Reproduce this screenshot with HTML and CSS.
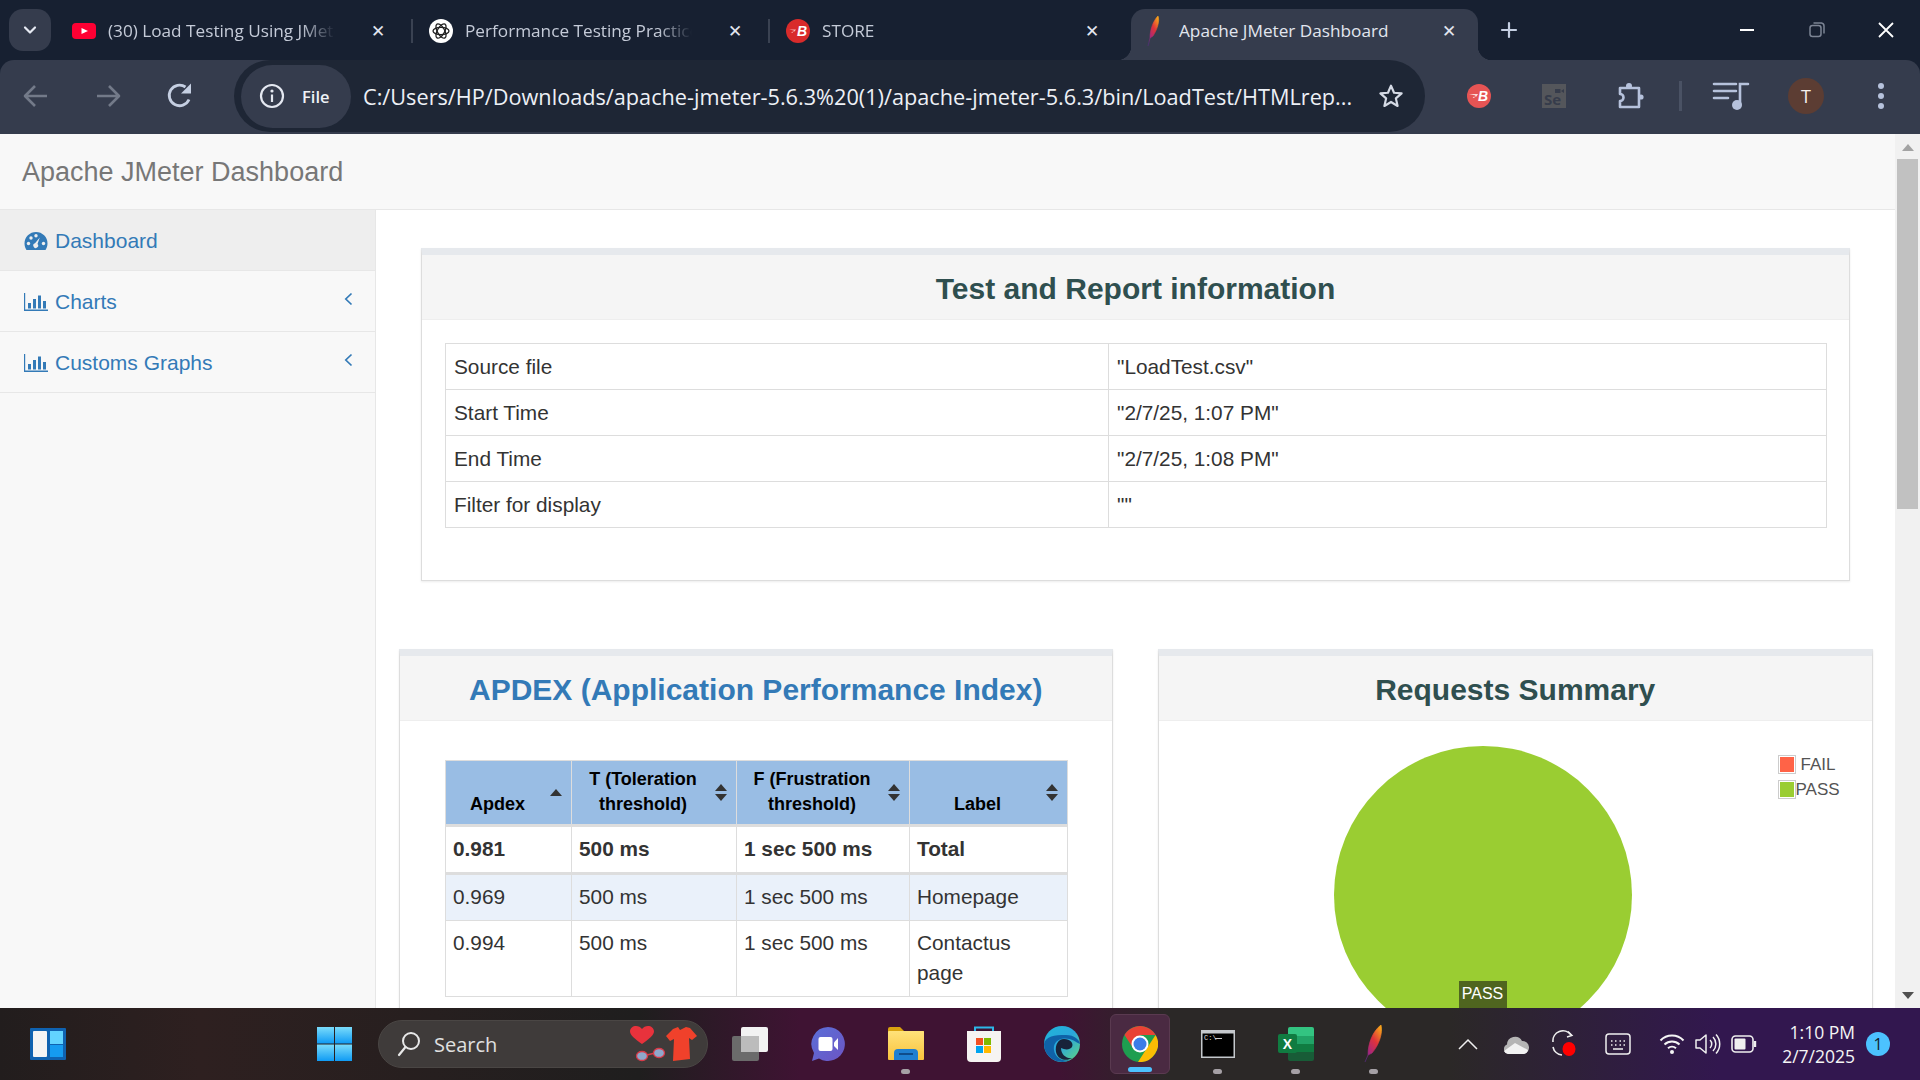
FILE: index.html
```html
<!DOCTYPE html>
<html lang="en">
<head>
    <meta charset="UTF-8">
    <meta name="viewport" content="width=device-width, initial-scale=1.0">
    <title>Apache JMeter Dashboard</title>
    <link rel="stylesheet" href="styles.css">
</head>
<body>
    <svg class="defs-holder" width="0" height="0">
        <defs>
            <linearGradient id="feather" x1="0.8" y1="0" x2="0.2" y2="1">
                <stop offset="0" stop-color="#f7a11b"/>
                <stop offset="0.4" stop-color="#e0333a"/>
                <stop offset="0.8" stop-color="#a3267f"/>
                <stop offset="1" stop-color="#5b2a86"/>
            </linearGradient>
            <linearGradient id="edgeFill" x1="0" y1="0" x2="1" y2="1">
                <stop offset="0" stop-color="#1fb5d8"/>
                <stop offset="0.5" stop-color="#2aa6dc"/>
                <stop offset="1" stop-color="#63d77e"/>
            </linearGradient>
            <linearGradient id="startFill" x1="0" y1="0" x2="0" y2="1">
                <stop offset="0" stop-color="#7adcfb"/>
                <stop offset="1" stop-color="#0f9bf4"/>
            </linearGradient>
            <linearGradient id="meetFill" x1="0" y1="0" x2="1" y2="1">
                <stop offset="0" stop-color="#5a6fd8"/>
                <stop offset="1" stop-color="#6d55c4"/>
            </linearGradient>
            <linearGradient id="folderFill" x1="0" y1="0" x2="0" y2="1">
                <stop offset="0" stop-color="#ffe27a"/>
                <stop offset="1" stop-color="#f9c23c"/>
            </linearGradient>
        </defs>
    </svg>

    <div class="tab-strip">
        <button class="tab-search">
            <svg width="16" height="16" viewBox="0 0 16 16"><path d="M3 5.5 8 10.5 13 5.5" fill="none" stroke="#e6eaf3" stroke-width="2.2" stroke-linecap="round" stroke-linejoin="round"/></svg>
        </button>

        <div class="tab">
            <span class="favicon">
                <svg width="24" height="16" viewBox="0 0 24 16"><rect width="24" height="16" rx="4" fill="#ff0033"/><path d="M9.5 5 16 8 9.5 11Z" fill="#fff"/></svg>
            </span>
            <span class="tab-title">(30) Load Testing Using JMeter</span>
            <span class="tab-close">&#10005;</span>
        </div>
        <span class="tab-sep"></span>
        <div class="tab">
            <span class="favicon">
                <svg width="24" height="24" viewBox="0 0 24 24">
                    <circle cx="12" cy="12" r="12" fill="#fff"/>
                    <g fill="none" stroke="#222" stroke-width="1.3">
                        <ellipse cx="12" cy="12" rx="8" ry="3.6"/>
                        <ellipse cx="12" cy="12" rx="8" ry="3.6" transform="rotate(60 12 12)"/>
                        <ellipse cx="12" cy="12" rx="8" ry="3.6" transform="rotate(120 12 12)"/>
                    </g>
                </svg>
            </span>
            <span class="tab-title">Performance Testing Practice</span>
            <span class="tab-close">&#10005;</span>
        </div>
        <span class="tab-sep"></span>
        <div class="tab">
            <span class="favicon">
                <svg width="24" height="24" viewBox="0 0 24 24">
                    <circle cx="12" cy="12" r="12" fill="#d92b2b"/>
                    <path d="M3 10.5H10L8.5 12.5H6L7 14H5L8 11.5" fill="#f7b5b5"/>
                    <text x="11" y="17" class="badge-b">B</text>
                </svg>
            </span>
            <span class="tab-title">STORE</span>
            <span class="tab-close">&#10005;</span>
        </div>
        <div class="tab tab-active">
            <span class="favicon">
                <svg width="24" height="32" viewBox="0 0 24 32"><path d="M15 1C17 6 14 15 10 21L7 23C7 15 10 6 15 1ZM7 23 5 31" fill="url(#feather)" stroke="url(#feather)" stroke-width="0.6"/></svg>
            </span>
            <span class="tab-title">Apache JMeter Dashboard</span>
            <span class="tab-close">&#10005;</span>
        </div>
        <span class="tab-new">
            <svg width="18" height="18" viewBox="0 0 18 18"><path d="M9 2V16M2 9H16" stroke="#c5cfe2" stroke-width="2.2" stroke-linecap="round"/></svg>
        </span>

        <div class="window-controls">
            <span class="win-btn">
                <svg width="16" height="16" viewBox="0 0 16 16"><path d="M1 8H15" stroke="#fff" stroke-width="2"/></svg>
            </span>
            <span class="win-btn">
                <svg width="16" height="16" viewBox="0 0 16 16"><rect x="1" y="3.5" width="11" height="11" rx="2.5" fill="none" stroke="#7c8494" stroke-width="1.5"/><path d="M4.5 1H12.5A3 3 0 0 1 15 4V11.5" fill="none" stroke="#7c8494" stroke-width="1.5"/></svg>
            </span>
            <span class="win-btn win-close">
                <svg width="18" height="18" viewBox="0 0 18 18"><path d="M2 2 16 16M16 2 2 16" stroke="#fff" stroke-width="1.8"/></svg>
            </span>
        </div>
    </div>

    <div class="toolbar">
        <span class="nav-btn">
            <svg width="26" height="26" viewBox="0 0 26 26"><path d="M24 13H3M12 3 2 13 12 23" fill="none" stroke="#737a89" stroke-width="2.6" stroke-linejoin="round"/></svg>
        </span>
        <span class="nav-btn">
            <svg width="26" height="26" viewBox="0 0 26 26"><path d="M2 13H23M14 3 24 13 14 23" fill="none" stroke="#737a89" stroke-width="2.6" stroke-linejoin="round"/></svg>
        </span>
        <span class="nav-btn">
            <svg width="28" height="28" viewBox="0 0 28 28"><path d="M23 17.5A10.3 10.3 0 1 1 19.5 5" fill="none" stroke="#c5cfe2" stroke-width="2.8"/><path d="M15 11.5 25 11.5 25 1.5Z" fill="#c5cfe2"/></svg>
        </span>

        <div class="omnibox">
            <div class="site-chip">
                <svg width="26" height="26" viewBox="0 0 26 26"><circle cx="13" cy="13" r="11" fill="none" stroke="#e4e8f1" stroke-width="2.2"/><circle cx="13" cy="8" r="1.6" fill="#e4e8f1"/><path d="M13 11.5V19" stroke="#e4e8f1" stroke-width="2.2"/></svg>
                <span class="chip-label">File</span>
            </div>
            <span class="url">C:/Users/HP/Downloads/apache-jmeter-5.6.3%20(1)/apache-jmeter-5.6.3/bin/LoadTest/HTMLrep...</span>
            <svg class="star" width="26" height="26" viewBox="0 0 24 24"><path d="M12 2.5 14.8 9 21.8 9.6 16.5 14.2 18.1 21.2 12 17.5 5.9 21.2 7.5 14.2 2.2 9.6 9.2 9Z" fill="none" stroke="#d5dae5" stroke-width="2" stroke-linejoin="round"/></svg>
        </div>

        <div class="toolbar-icons">
            <span class="ext-btn">
                <svg width="24" height="24" viewBox="0 0 24 24">
                    <circle cx="12" cy="12" r="12" fill="#e65454"/>
                    <path d="M2 10H11L9.5 12.5H6.5L8 14H5.5L8.5 11.5" fill="#fbd9d9"/>
                    <text x="11" y="17" class="badge-b">B</text>
                </svg>
            </span>
            <span class="ext-btn">
                <svg width="24" height="24" viewBox="0 0 24 24">
                    <rect width="24" height="24" fill="#54565b"/>
                    <path d="M13 5H18.5V9H13ZM19 7 22 5V9Z" fill="#363c4b"/>
                    <text x="2" y="21" class="selenium-text">Se</text>
                </svg>
            </span>
            <span class="ext-btn">
                <svg width="34" height="32" viewBox="0 0 34 32">
                    <path d="M8 8H27V27H8V21A3.5 3.5 0 0 0 8 14Z" fill="none" stroke="#b6c2dc" stroke-width="2.6" stroke-linejoin="round"/>
                    <circle cx="17" cy="6" r="3" fill="#b6c2dc"/>
                    <circle cx="29" cy="17" r="2.6" fill="#b6c2dc"/>
                </svg>
            </span>
            <span class="toolbar-sep"></span>
            <span class="ext-btn">
                <svg width="38" height="30" viewBox="0 0 38 30">
                    <path d="M2 3H24M2 10H24M2 17H16" stroke="#b6c2dc" stroke-width="2.6" stroke-linecap="round"/>
                    <path d="M28 24V3H36" fill="none" stroke="#b6c2dc" stroke-width="2.6" stroke-linecap="round"/>
                    <circle cx="25" cy="24" r="5" fill="#b6c2dc"/>
                </svg>
            </span>
            <span class="ext-btn">
                <span class="avatar">T</span>
            </span>
            <span class="ext-btn">
                <svg width="8" height="28" viewBox="0 0 8 28"><circle cx="4" cy="4" r="3" fill="#b6c2dc"/><circle cx="4" cy="14" r="3" fill="#b6c2dc"/><circle cx="4" cy="24" r="3" fill="#b6c2dc"/></svg>
            </span>
        </div>
    </div>

    <div class="viewport">
        <div class="page">
            <nav class="navbar">
                <span class="navbar-brand">Apache JMeter Dashboard</span>
            </nav>
            <div class="page-body">
                <aside class="sidebar">
                    <a class="side-link active">
                        <svg class="side-icon" width="24" height="20" viewBox="0 0 24 20"><path d="M12 1A11.5 11.5 0 0 0 .5 12.500C.5 15 1.300 17 2.500 19H21.500C22.700 17 23.500 15 23.500 12.500A11.500 11.500 0 0 0 12 1Z" fill="#337ab7"/><g fill="#eee"><circle cx="4.500" cy="12.500" r="1.700"/><circle cx="7" cy="7" r="1.700"/><circle cx="12" cy="4.800" r="1.700"/><circle cx="19.500" cy="12.500" r="1.700"/><path d="M15.800 6.500 13.500 13A2.400 2.400 0 1 1 11 12.300Z"/></g></svg>
                        <span>Dashboard</span>
                    </a>
                    <a class="side-link">
                        <svg class="side-icon" width="24" height="18" viewBox="0 0 24 18"><path d="M.5 0V17.300H24" fill="none" stroke="#337ab7" stroke-width="1.400"/><path d="M4 10H7V15.500H4ZM9 6H12V15.500H9ZM14 2.500H17V15.500H14ZM19 8H22V15.500H19Z" fill="#337ab7"/></svg>
                        <span>Charts</span>
                        <svg class="side-arrow" width="9" height="14" viewBox="0 0 9 14"><path d="M7.500 1.500 1.800 7 7.500 12.500" fill="none" stroke="#337ab7" stroke-width="1.700"/></svg>
                    </a>
                    <a class="side-link">
                        <svg class="side-icon" width="24" height="18" viewBox="0 0 24 18"><path d="M.5 0V17.300H24" fill="none" stroke="#337ab7" stroke-width="1.400"/><path d="M4 10H7V15.500H4ZM9 6H12V15.500H9ZM14 2.500H17V15.500H14ZM19 8H22V15.500H19Z" fill="#337ab7"/></svg>
                        <span>Customs Graphs</span>
                        <svg class="side-arrow" width="9" height="14" viewBox="0 0 9 14"><path d="M7.500 1.500 1.800 7 7.500 12.500" fill="none" stroke="#337ab7" stroke-width="1.700"/></svg>
                    </a>
                </aside>

                <main class="content">
                    <section class="panel panel-info">
                        <div class="panel-heading">
                            <h3 class="panel-title">Test and Report information</h3>
                        </div>
                        <div class="panel-body info-body">
                            <table class="data-table info-table">
                                <colgroup><col class="info-key"><col></colgroup>
                                <tbody>
                                    <tr><td>Source file</td><td>"LoadTest.csv"</td></tr>
                                    <tr><td>Start Time</td><td>"2/7/25, 1:07 PM"</td></tr>
                                    <tr><td>End Time</td><td>"2/7/25, 1:08 PM"</td></tr>
                                    <tr><td>Filter for display</td><td>""</td></tr>
                                </tbody>
                            </table>
                        </div>
                    </section>

                    <div class="panel-row">
                        <section class="panel">
                            <div class="panel-heading">
                                <h3 class="panel-title title-link">APDEX (Application Performance Index)</h3>
                            </div>
                            <div class="panel-body apdex-body">
                                <table class="data-table apdex-table">
                                    <colgroup>
                                        <col class="col-apdex"><col class="col-t"><col class="col-f"><col class="col-label">
                                    </colgroup>
                                    <thead>
                                        <tr>
                                            <th>Apdex<span class="sort sort-asc"></span></th>
                                            <th>T (Toleration threshold)<span class="sort"></span></th>
                                            <th>F (Frustration threshold)<span class="sort"></span></th>
                                            <th>Label<span class="sort"></span></th>
                                        </tr>
                                    </thead>
                                    <tbody>
                                        <tr class="row-total"><td>0.981</td><td>500 ms</td><td>1 sec 500 ms</td><td>Total</td></tr>
                                        <tr class="row-even"><td>0.969</td><td>500 ms</td><td>1 sec 500 ms</td><td>Homepage</td></tr>
                                        <tr><td>0.994</td><td>500 ms</td><td>1 sec 500 ms</td><td>Contactus page</td></tr>
                                    </tbody>
                                </table>
                            </div>
                        </section>

                        <section class="panel">
                            <div class="panel-heading">
                                <h3 class="panel-title">Requests Summary</h3>
                            </div>
                            <div class="panel-body chart-body">
                                <div class="pie">
                                    <span class="pie-label">PASS</span>
                                </div>
                                <div class="legend">
                                    <div class="legend-row"><span class="legend-box"><span class="legend-fail"></span></span><span class="legend-text legend-text-fail">FAIL</span></div>
                                    <div class="legend-row"><span class="legend-box"><span class="legend-pass"></span></span><span class="legend-text">PASS</span></div>
                                </div>
                            </div>
                        </section>
                    </div>
                </main>
            </div>
        </div>

        <div class="scrollbar">
            <span class="scroll-arrow scroll-up"></span>
            <span class="scroll-thumb"></span>
            <span class="scroll-arrow scroll-down"></span>
        </div>
    </div>

    <footer class="taskbar">
        <span class="task-slot task-widgets">
            <svg width="36" height="32" viewBox="0 0 36 32">
                <rect width="36" height="32" rx="1" fill="#0f62b0"/>
                <rect x="3" y="3" width="14" height="26" rx="1" fill="#f4f4f4"/>
                <rect x="20" y="3" width="13" height="13" fill="#62d4ff"/>
                <rect x="20" y="17" width="13" height="12" fill="#159bf0"/>
            </svg>
        </span>
        <span class="task-slot task-start">
            <svg width="35" height="34" viewBox="0 0 35 34">
                <rect width="17" height="16.500" fill="url(#startFill)"/>
                <rect x="18" width="17" height="16.500" fill="url(#startFill)"/>
                <rect y="17.500" width="17" height="16.500" fill="url(#startFill)"/>
                <rect x="18" y="17.500" width="17" height="16.500" fill="url(#startFill)"/>
            </svg>
        </span>
        <div class="task-search">
            <svg width="24" height="26" viewBox="0 0 24 26"><circle cx="14" cy="10" r="8" fill="none" stroke="#e8e8e8" stroke-width="2"/><path d="M8.500 16 2 24" stroke="#e8e8e8" stroke-width="2.200" stroke-linecap="round"/></svg>
            <span class="search-text">Search</span>
            <svg class="search-art" width="68" height="36" viewBox="0 0 68 36">
                <path d="M13 18C6 13 1 9 1 5.500 1 2 4 0 7 0 9.500 0 11.500 1 13 3 14.500 1 16.500 0 19 0 22 0 25 2 25 5.500 25 9 20 13 13 18Z" fill="#e8323c"/>
                <path d="M18 29 26 27" stroke="#d93a48" stroke-width="1.500"/>
                <g fill="#8fa8cc" stroke="#d93a48" stroke-width="1.300"><ellipse cx="13" cy="30" rx="5.500" ry="4.500"/><ellipse cx="30" cy="27" rx="5.500" ry="4.500"/></g>
                <path d="M44 3 49 1 51 4 57 1 61 2 68 10 63 14 60 12 61 33 44 35 45 13 41 15 37 10Z" fill="#f0412b"/>
            </svg>
        </div>
        <span class="task-slot">
            <svg width="36" height="34" viewBox="0 0 36 34">
                <rect y="9" width="27" height="25" rx="2" fill="#6b6b6b"/>
                <rect x="9" width="27" height="25" rx="2" fill="#f2f2f2"/>
                <rect x="9" y="9" width="18" height="16" fill="#bcbcbc"/>
            </svg>
        </span>
        <span class="task-slot">
            <svg width="34" height="34" viewBox="0 0 34 34">
                <path d="M17 0A17 17 0 1 1 8 31.500L1 34 3 26A17 17 0 0 1 17 0Z" fill="url(#meetFill)"/>
                <rect x="7.500" y="10" width="14" height="14" rx="2" fill="#fff"/>
                <path d="M23 15.500 27 11V23L23 19Z" fill="#fff"/>
            </svg>
        </span>
        <span class="task-slot task-running">
            <svg width="36" height="34" viewBox="0 0 36 34">
                <path d="M0 2A2 2 0 0 1 2 0H12L16 4H36V12H0Z" fill="#d9a20f"/>
                <rect y="4" width="36" height="29" rx="1" fill="url(#folderFill)"/>
                <path d="M6 33V26A4 4 0 0 1 10 22H26A4 4 0 0 1 30 26V33Z" fill="#1f7fd0"/>
                <rect x="11" y="26" width="14" height="2" fill="#0f4c8a"/>
            </svg>
        </span>
        <span class="task-slot">
            <svg width="36" height="36" viewBox="0 0 36 36">
                <path d="M9 7V1.500H27V7" fill="none" stroke="#2cb7e8" stroke-width="2"/>
                <path d="M1 5H35V32A4 4 0 0 1 31 36H5A4 4 0 0 1 1 32Z" fill="#f6f4f2"/>
                <rect x="10" y="12" width="7" height="7" fill="#f25022"/>
                <rect x="18" y="12" width="7" height="7" fill="#7fba00"/>
                <rect x="10" y="20" width="7" height="7" fill="#00a4ef"/>
                <rect x="18" y="20" width="7" height="7" fill="#ffb900"/>
            </svg>
        </span>
        <span class="task-slot">
            <svg width="36" height="36" viewBox="0 0 36 36">
                <circle cx="18" cy="18" r="18" fill="url(#edgeFill)"/>
                <path d="M0 18A18 18 0 0 0 26 34C18 36 11 31 10 24 9 18 13 13 20 12.500 27 12 32 16 36 18 36 14 30 9 22 9 10 9 2 10 0 18Z" fill="#0f62a8"/>
                <path d="M20 13C26 13 30 17 28 21 26 24 21 24 17 22 17 29 23 33 28 32 24 35 14 35 12 26 11 19 14 13 20 13Z" fill="#18233a"/>
            </svg>
        </span>
        <span class="task-slot task-current">
            <svg width="36" height="36" viewBox="0 0 36 36">
                <circle cx="18" cy="18" r="18" fill="#1e9e50"/>
                <path d="M16 35.900A18 18 0 0 0 33.600 9L25 22Z" fill="#fbbc04"/>
                <path d="M33.600 9A18 18 0 0 0 2.500 9L11 22 18 9Z" fill="#e94235"/>
                <circle cx="18" cy="18" r="8.500" fill="#fff"/>
                <circle cx="18" cy="18" r="6.500" fill="#3b7de8"/>
            </svg>
        </span>
        <span class="task-slot task-running">
            <svg width="34" height="28" viewBox="0 0 34 28">
                <rect width="34" height="28" fill="#c4c8cc"/>
                <rect x="1.500" y="3.500" width="31" height="23" fill="#000"/>
                <text x="3" y="10" class="cmd-text">C:\</text>
                <rect x="14" y="8" width="7" height="1" fill="#ccc"/>
            </svg>
        </span>
        <span class="task-slot task-running">
            <svg width="36" height="34" viewBox="0 0 36 34">
                <path d="M10 2A2 2 0 0 1 12 0H34A2 2 0 0 1 36 2V17H10Z" fill="#33c481"/>
                <rect x="10" y="9" width="26" height="8" fill="#21a366"/>
                <rect x="10" y="17" width="26" height="8" fill="#107c41"/>
                <path d="M10 25H36V32A2 2 0 0 1 34 34H12A2 2 0 0 1 10 32Z" fill="#185c37"/>
                <rect y="7" width="19" height="19" rx="2" fill="#107c41"/>
                <text x="9.500" y="22" class="excel-text">X</text>
            </svg>
        </span>
        <span class="task-slot task-running">
            <svg width="20" height="38" viewBox="0 0 20 38"><path d="M17 0C19 8 15 20 8 28L4 30C4 18 9 6 17 0ZM4 30 1 37" fill="url(#feather)" stroke="url(#feather)" stroke-width="0.700"/></svg>
        </span>

        <div class="tray">
            <span class="tray-icon tray-chevron">
                <svg width="20" height="12" viewBox="0 0 20 12"><path d="M1 11 10 2 19 11" fill="none" stroke="#f0f0f0" stroke-width="1.500"/></svg>
            </span>
            <span class="tray-icon tray-cloud">
                <svg width="26" height="20" viewBox="0 0 26 20"><path d="M5 20A5 5 0 0 1 4 10.500 8 8 0 0 1 19 7 6.500 6.500 0 0 1 20 20Z" fill="#b5b5b5"/><path d="M1 17 12 9 25 16A5 5 0 0 1 20 20H5A5 5 0 0 1 1 17Z" fill="#f2f2f2"/></svg>
            </span>
            <span class="tray-icon tray-sync">
                <svg width="30" height="28" viewBox="0 0 30 28"><path d="M4 12A10 10 0 0 1 22 5M4 17A10 10 0 0 0 13 25" fill="none" stroke="#f0f0f0" stroke-width="1.600"/><path d="M19 1.500 23 5.500 18 7" fill="none" stroke="#f0f0f0" stroke-width="1.400"/><ellipse cx="20" cy="19" rx="6.500" ry="7" fill="#f00"/></svg>
            </span>
            <span class="tray-icon tray-keyboard">
                <svg width="26" height="22" viewBox="0 0 26 22"><rect x="1" y="1" width="24" height="20" rx="3" fill="none" stroke="#f0f0f0" stroke-width="1.500"/><path d="M6 8H7.500M10 8H11.500M14.500 8H16M18.500 8H20M6 12H7.500M10 12H11.500M14.500 12H16M18.500 12H20M8 16H18" stroke="#f0f0f0" stroke-width="1.500"/></svg>
            </span>
            <span class="tray-icon tray-wifi">
                <svg width="26" height="22" viewBox="0 0 26 22"><path d="M1.500 7.500A16 16 0 0 1 24.500 7.500M5.500 11.500A11 11 0 0 1 20.500 11.500M9 15.200A6 6 0 0 1 17 15.200" fill="none" stroke="#f5f5f5" stroke-width="2"/><circle cx="13" cy="19" r="2" fill="#f5f5f5"/></svg>
            </span>
            <span class="tray-icon tray-volume">
                <svg width="26" height="24" viewBox="0 0 26 24"><path d="M1 8H5L11 3V21L5 16H1Z" fill="none" stroke="#f0f0f0" stroke-width="1.500" stroke-linejoin="round"/><path d="M15 8A5.500 5.500 0 0 1 15 16M18 5A10 10 0 0 1 18 19M21 2.500A14 14 0 0 1 21 21.500" fill="none" stroke="#f0f0f0" stroke-width="1.500"/></svg>
            </span>
            <span class="tray-icon tray-battery">
                <svg width="26" height="18" viewBox="0 0 26 18"><rect x="1" y="1" width="21" height="16" rx="3.500" fill="none" stroke="#f0f0f0" stroke-width="1.600"/><rect x="3.500" y="3.500" width="11" height="11" rx="1" fill="#f0f0f0"/><path d="M24 6V12" stroke="#f0f0f0" stroke-width="2.400"/></svg>
            </span>
            <div class="clock">
                <span>1:10 PM</span>
                <span>2/7/2025</span>
            </div>
            <span class="notify-badge">1</span>
        </div>
    </footer>
</body>
</html>
```

FILE: styles.css
```css
* {
    box-sizing: border-box;
}

html, body {
    margin: 0;
    padding: 0;
    height: 100%;
    overflow: hidden;
}

body {
    display: flex;
    flex-direction: column;
    height: 1080px;
    background-color: #172031;
    font-family: 'Liberation Sans', Arial, sans-serif;
}

.defs-holder {
    position: absolute;
}

/* browser tabs */
.tab-strip {
    display: flex;
    align-items: flex-start;
    height: 60px;
    flex: none;
    padding-left: 9px;
    background-color: #172031;
    font-family: 'Open Sans', 'Noto Sans', sans-serif;
}

.tab-search {
    display: flex;
    align-items: center;
    justify-content: center;
    width: 42px;
    height: 42px;
    margin-top: 9px;
    padding: 0;
    border: 0;
    border-radius: 14px;
    background-color: #353c4d;
}

.tab {
    display: flex;
    align-items: center;
    width: 355px;
    height: 51px;
    margin-top: 9px;
    padding: 0 21px 8px 16px;
    font-size: 17.200px;
    color: #c5cbd8;
}

.tab:first-of-type {
    margin-left: 5px;
}

.favicon {
    display: flex;
    align-items: center;
    justify-content: center;
    flex: none;
    width: 24px;
    margin-right: 12px;
}

.tab-title {
    width: 227px;
    overflow: hidden;
    white-space: nowrap;
    -webkit-mask-image: linear-gradient(to right, #000 85%, transparent 100%);
    mask-image: linear-gradient(to right, #000 85%, transparent 100%);
}

.tab-close {
    width: 24px;
    margin-left: auto;
    text-align: center;
    font-size: 17px;
    font-family: 'DejaVu Sans', sans-serif;
    color: #e2e6ef;
}

.tab-sep {
    flex: none;
    width: 2px;
    height: 24px;
    margin-top: 19px;
    background-color: #3a4252;
}

.tab-active {
    position: relative;
    width: 347px;
    margin-left: 6px;
    padding: 0 17px 8px 12px;
    border-radius: 14px 14px 0 0;
    background-color: #353c4d;
    color: #e2e6ef;
}

.tab-active::before,
.tab-active::after {
    content: "";
    position: absolute;
    bottom: 0;
    width: 14px;
    height: 14px;
}

.tab-active::before {
    left: -14px;
    background: radial-gradient(circle at 0 0, transparent 14px, #353c4d 14.500px);
}

.tab-active::after {
    right: -14px;
    background: radial-gradient(circle at 100% 0, transparent 14px, #353c4d 14.500px);
}

.tab-active .tab-title {
    -webkit-mask-image: none;
    mask-image: none;
}

.tab-new {
    display: flex;
    align-items: center;
    justify-content: center;
    width: 36px;
    height: 36px;
    margin: 12px 0 0 13px;
}

.window-controls {
    display: flex;
    margin-left: auto;
}

.win-btn {
    display: flex;
    align-items: center;
    justify-content: center;
    width: 70px;
    height: 60px;
}

.win-close {
    width: 68px;
}

/* address bar */
.toolbar {
    display: flex;
    align-items: center;
    flex: none;
    height: 74px;
    padding-bottom: 2px;
    border-radius: 14px 14px 0 0;
    background-color: #353c4d;
}

.nav-btn {
    display: flex;
    align-items: center;
    justify-content: center;
    width: 72px;
    height: 72px;
}

.omnibox {
    display: flex;
    align-items: center;
    width: 1191px;
    height: 72px;
    margin-left: 18px;
    padding-left: 7px;
    border-radius: 36px;
    background-color: #1e2635;
}

.site-chip {
    display: flex;
    align-items: center;
    flex: none;
    width: 110px;
    height: 63px;
    padding-left: 18px;
    border-radius: 32px;
    background-color: #353c4d;
}

.chip-label {
    margin-left: 17px;
    font: 600 16.500px 'Open Sans', sans-serif;
    color: #eef1f6;
}

.url {
    flex: 1;
    margin-left: 12px;
    font: 21.700px 'Open Sans', sans-serif;
    color: #edf0f6;
    white-space: nowrap;
}

.star {
    margin-right: 21px;
}

.toolbar-icons {
    display: flex;
    align-items: center;
    margin-left: 16.500px;
}

.ext-btn {
    display: flex;
    align-items: center;
    justify-content: center;
    width: 75px;
    height: 72px;
}

.toolbar-sep {
    width: 3px;
    height: 30px;
    margin: 0 12px;
    background-color: #4a5264;
}

.avatar {
    display: flex;
    align-items: center;
    justify-content: center;
    width: 36px;
    height: 36px;
    border-radius: 50%;
    background-color: #5c3d33;
    color: #f5f0ee;
    font: 18px 'Open Sans', sans-serif;
}

.badge-b {
    font: italic 700 14px 'Liberation Sans', sans-serif;
    fill: #fff;
}

.selenium-text {
    font: 700 15px 'Open Sans', sans-serif;
    fill: #363c4b;
}

.cmd-text {
    font: 7px 'Liberation Mono', monospace;
    fill: #ddd;
}

.excel-text {
    font: 700 14px 'Liberation Sans', sans-serif;
    fill: #fff;
    text-anchor: middle;
}

/* page in the browser window */
.viewport {
    display: flex;
    flex: 1;
    min-height: 0;
    background-color: #fff;
}

.page {
    flex: 1;
    min-width: 0;
    overflow: hidden;
    color: #333;
    font-size: 21px;
    line-height: 30px;
}

.navbar {
    display: flex;
    align-items: center;
    height: 76px;
    padding-left: 22px;
    border-bottom: 1px solid #e7e7e7;
    background-color: #f8f8f8;
}

.navbar-brand {
    font-size: 27px;
    color: #777;
}

.page-body {
    display: flex;
    height: 800px;
}

.sidebar {
    flex: none;
    width: 376px;
    border-right: 1px solid #e7e7e7;
    background-color: #f8f8f8;
}

.side-link {
    display: flex;
    align-items: center;
    height: 61px;
    padding: 1px 22px 0 24px;
    border-bottom: 1px solid #e7e7e7;
    color: #337ab7;
}

.side-link.active {
    background-color: #eee;
}

.side-icon {
    flex: none;
    margin-right: 7px;
}

.side-arrow {
    margin: -6px 0 0 auto;
}

.content {
    flex: 1;
    min-width: 0;
    padding: 38px 22px 0 23px;
}

.panel {
    border: 1px solid #ddd;
    border-top-width: 7px;
    border-top-color: #e6e9ed;
    background-color: #fff;
    box-shadow: 0 1px 2px rgba(0, 0, 0, 0.08);
}

.panel-info {
    margin: 0 23px 68px 22px;
}

.panel-heading {
    display: flex;
    align-items: center;
    justify-content: center;
    height: 65px;
    padding-top: 3px;
    border-bottom: 1px solid #eee;
    background-color: #f5f5f5;
}

.panel-title {
    margin: 0;
    font-size: 30px;
    font-weight: 700;
    color: #2f4f4f;
}

.title-link {
    color: #337ab7;
}

.info-body {
    padding: 23px 22px 52px 23px;
}

.apdex-body {
    padding: 39px 44px 40px 45px;
}

.chart-body {
    position: relative;
    height: 340px;
}

.panel-row {
    display: grid;
    grid-template-columns: 713.500px 1fr;
    gap: 45px;
}

/* tables */
.data-table {
    width: 100%;
    table-layout: fixed;
    border-collapse: collapse;
    font-size: 20.800px;
}

.data-table td,
.data-table th {
    padding: 8px 8px 7px;
    border: 1px solid #ddd;
    vertical-align: top;
}

.info-key {
    width: 663px;
}

.col-apdex {
    width: 126px;
}

.col-t {
    width: 165px;
}

.col-f {
    width: 173px;
}

.col-label {
    width: 158px;
}

.apdex-table td {
    padding: 7px 8px 8px 7px;
}

.apdex-table th {
    position: relative;
    padding: 6px 30px 7px 8px;
    border-bottom: 3px solid #ddd;
    background-color: #99bde4;
    color: #000;
    font-size: 18px;
    line-height: 25px;
    text-align: center;
    vertical-align: bottom;
}

.row-total td {
    border-bottom: 3px solid #ddd;
    font-weight: 700;
}

.row-even td {
    background-color: #eaf1fa;
}

/* tablesorter arrows */
.sort {
    position: absolute;
    top: 50%;
    right: 9px;
    width: 12px;
    height: 17px;
    margin-top: -9px;
}

.sort::before,
.sort::after {
    content: "";
    position: absolute;
    left: 0;
    border-left: 6px solid transparent;
    border-right: 6px solid transparent;
}

.sort::before {
    top: 0;
    border-bottom: 7px solid #333;
}

.sort::after {
    bottom: 0;
    border-top: 7px solid #333;
}

.sort-asc::after {
    display: none;
}

.sort-asc::before {
    top: 5px;
}

/* pie chart */
.pie {
    position: absolute;
    top: 25px;
    left: 175px;
    width: 298px;
    height: 298px;
    border-radius: 50%;
    background-color: #9acd32;
}

.pie-label {
    position: absolute;
    top: 235px;
    left: 125px;
    width: 48px;
    height: 27px;
    background-color: #4f651f;
    color: #fff;
    font-size: 16px;
    line-height: 26px;
    text-align: center;
}

.legend {
    position: absolute;
    top: 34px;
    left: 619px;
    color: #545454;
    font-size: 17px;
    line-height: 19px;
}

.legend-row {
    display: flex;
    height: 25px;
}

.legend-box {
    display: flex;
    align-items: center;
    justify-content: center;
    width: 18px;
    height: 19px;
    border: 1px solid #ccc;
}

.legend-fail,
.legend-pass {
    display: block;
    width: 14px;
    height: 15px;
}

.legend-fail {
    background-color: #ff6347;
}

.legend-pass {
    background-color: #9acd32;
}

.legend-text-fail {
    margin-left: 5px;
}

/* page scrollbar */
.scrollbar {
    display: flex;
    flex-direction: column;
    align-items: center;
    flex: none;
    width: 25px;
    background-color: #f1f1f1;
}

.scroll-arrow {
    flex: none;
    width: 0;
    height: 0;
    border-left: 6px solid transparent;
    border-right: 6px solid transparent;
}

.scroll-up {
    margin-top: 10px;
    border-bottom: 7px solid #a3a3a3;
}

.scroll-down {
    margin-top: auto;
    margin-bottom: 9px;
    border-top: 7px solid #505050;
}

.scroll-thumb {
    width: 21px;
    height: 350px;
    margin-top: 8px;
    background-color: #c1c1c1;
}

/* windows taskbar */
.taskbar {
    display: flex;
    align-items: center;
    flex: none;
    height: 72px;
    padding-left: 9px;
    background: linear-gradient(to right, #221d1d 0, #2e2020 200px, #1f1e1e 640px, #3f1333 800px, #3f1333 1060px, #2b2827 1170px, #2b2827 1450px, #32174f 1720px, #32174f 1920px);
}

.task-slot {
    position: relative;
    display: flex;
    align-items: center;
    justify-content: center;
    flex: none;
    width: 78px;
    height: 60px;
}

.task-start {
    margin-left: 208px;
    margin-right: 5px;
}

.task-search {
    display: flex;
    align-items: center;
    flex: none;
    width: 330px;
    height: 48px;
    margin-right: 3px;
    padding-left: 18px;
    border: 1px solid #4a4644;
    border-radius: 24px;
    background-color: #3f3b3a;
}

.search-text {
    margin-left: 13px;
    color: #e0e0e0;
    font: 20px 'Open Sans', sans-serif;
}

.search-art {
    margin-left: auto;
    margin-right: 10px;
}

.task-running::after {
    content: "";
    position: absolute;
    bottom: 0;
    left: 34px;
    width: 9px;
    height: 5px;
    border-radius: 3px;
    background-color: #a5a0a5;
}

.task-current {
    width: 60px;
    margin: 0 9px;
    border-radius: 6px;
    border: 1px solid #5a3a50;
    background-color: #4a2a42;
}

.task-current::after {
    content: "";
    position: absolute;
    bottom: 1px;
    left: 17px;
    width: 24px;
    height: 5px;
    border-radius: 3px;
    background-color: #4cc2ff;
}

.tray {
    display: flex;
    align-items: center;
    margin-left: 37px;
    color: #fff;
}

.tray-icon {
    display: flex;
    align-items: center;
    justify-content: center;
    flex: none;
    width: 36px;
}

.tray-chevron {
    margin-right: 12px;
}

.tray-cloud {
    margin-right: 12px;
}

.tray-sync {
    margin-right: 18px;
}

.tray-keyboard {
    margin-right: 18px;
}

.clock {
    display: flex;
    flex-direction: column;
    align-items: flex-end;
    width: 93px;
    font: 17.500px/24px 'Open Sans', sans-serif;
    color: #f5f5f5;
}

.notify-badge {
    display: flex;
    align-items: center;
    justify-content: center;
    width: 24px;
    height: 24px;
    margin-left: 11px;
    border-radius: 50%;
    background-color: #4cc2ff;
    color: #10202c;
    font: 16px 'Open Sans', sans-serif;
}
```
